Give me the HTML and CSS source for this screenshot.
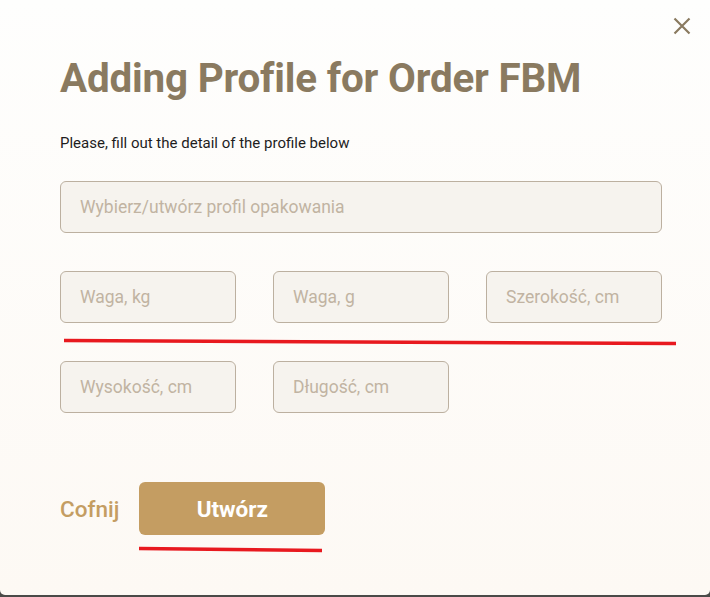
FILE: index.html
```html
<!DOCTYPE html>
<html lang="pl">
<head>
<meta charset="utf-8">
<link rel="stylesheet" href="styles.css">
</head>
<body>
<div class="modal">
  <button class="close" aria-label="close">
    <svg width="18" height="18" viewBox="0 0 18 18"><path d="M1.5 1.5 L16.5 16.5 M16.5 1.5 L1.5 16.5" stroke="#8a7a60" stroke-width="2.2" fill="none"/></svg>
  </button>
  <h1 class="title">Adding Profile for Order FBM</h1>
  <p class="subtitle">Please, fill out the detail of the profile below</p>
  <div class="field full">Wybierz/utwórz profil opakowania</div>
  <div class="grid">
    <div class="field">Waga, kg</div>
    <div class="field">Waga, g</div>
    <div class="field">Szerokość, cm</div>
    <div class="field">Wysokość, cm</div>
    <div class="field">Długość, cm</div>
  </div>
  <div class="actions">
    <span class="back">Cofnij</span>
    <button class="submit">Utwórz</button>
  </div>
  <svg class="mark" width="710" height="597" viewBox="0 0 710 597">
    <line x1="64" y1="340.5" x2="676" y2="343.5" stroke="#e8191f" stroke-width="3.5"/>
    <line x1="139" y1="548.5" x2="322" y2="550.5" stroke="#e8191f" stroke-width="3.5"/>
  </svg>
</div>
</body>
</html>
```
FILE: styles.css
```css
* { box-sizing: border-box; }
html, body { margin: 0; padding: 0; }
body {
  width: 710px;
  height: 597px;
  background: #4a4a48;
  font-family: Roboto, "Liberation Sans", sans-serif;
  overflow: hidden;
}
.modal {
  position: relative;
  width: 710px;
  height: 595px;
  background: linear-gradient(#fefefd, #fdf9f4);
  border-radius: 0 0 5px 5px;
  padding: 0 48px 0 60px;
}
.close {
  position: absolute;
  top: 17px;
  right: 19px;
  width: 18px;
  height: 18px;
  padding: 0;
  border: 0;
  background: none;
  display: block;
}
.close svg { display: block; }
.title {
  margin: 0;
  padding-top: 55px;
  font-size: 40.4px;
  line-height: 48px;
  font-weight: 700;
  color: #8a7a60;
  letter-spacing: -0.2px;
}
.subtitle {
  margin: 32px 0 0;
  font-size: 15px;
  line-height: 16px;
  color: #1e1e1e;
}
.field {
  height: 52px;
  border: 1px solid #bcb0a0;
  border-radius: 6px;
  background: #f6f3ee;
  color: #c1b3a2;
  font-size: 17.5px;
  display: flex;
  align-items: center;
  padding-left: 19px;
}
.full {
  margin-top: 30px;
  width: 602px;
}
.grid {
  margin-top: 38px;
  width: 602px;
  display: grid;
  grid-template-columns: repeat(3, 176px);
  column-gap: 37px;
  row-gap: 38px;
}
.actions {
  margin-top: 69px;
  display: flex;
  align-items: center;
  gap: 20px;
}
.back {
  font-size: 22.5px;
  font-weight: 500;
  color: #c49d62;
}
.submit {
  width: 186px;
  height: 53px;
  border: 0;
  border-radius: 6px;
  background: #c49d62;
  color: #ffffff;
  font-family: Roboto, "Liberation Sans", sans-serif;
  font-size: 22.5px;
  font-weight: 700;
}
.mark {
  position: absolute;
  left: 0;
  top: 0;
  pointer-events: none;
}
```
